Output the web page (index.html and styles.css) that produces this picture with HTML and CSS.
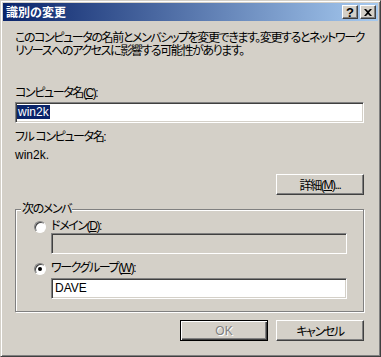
FILE: index.html
```html
<!DOCTYPE html>
<html lang="ja">
<head>
  <meta charset="utf-8">
  <title>識別の変更</title>
  <link rel="stylesheet" href="styles.css">
</head>
<body>
  <div class="window">
    <div class="titlebar">
      <span class="title">識別の変更</span>
      <div class="caption-btns">
        <span class="cap-btn help">?</span>
        <span class="cap-btn close">
          <svg width="8" height="7" viewBox="0 0 8 7"><path d="M0 0h2l2 2 2-2h2L5 3.5 8 7H6L4 5 2 7H0l3-3.5z" fill="#000"/></svg>
        </span>
      </div>
    </div>

    <div class="content">
      <p class="desc">このコンピュータの名前とメンバシップを変更できます。変更するとネットワーク<br>リソースへのアクセスに影響する可能性があります。</p>

      <label class="label" for="name">コンピュータ名(<u>C</u>):</label>
      <div class="field" id="name"><span class="selected">win2k</span></div>

      <div class="label full-label">フル コンピュータ名:</div>
      <div class="full-name">win2k.</div>

      <div class="right-row">
        <span class="btn">詳細(<u>M</u>)...</span>
      </div>

      <fieldset class="group">
        <legend>次のメンバ</legend>
        <div class="radio-row">
          <span class="radio"></span>
          <span>ドメイン(<u>D</u>):</span>
        </div>
        <div class="field disabled"></div>
        <div class="radio-row second">
          <span class="radio checked"></span>
          <span>ワークグループ(<u>W</u>):</span>
        </div>
        <div class="field">DAVE</div>
      </fieldset>

      <div class="buttons">
        <span class="btn default disabled">OK</span>
        <span class="btn">キャンセル</span>
      </div>
    </div>
  </div>
</body>
</html>
```

FILE: styles.css
```css
body {
  margin: 0;
  background-color: #d4d0c8;
  font-family: "Liberation Sans", "Noto Sans CJK JP", sans-serif;
  font-size: 12px;
  color: #000;
}

.window {
  width: 381px;
  height: 357px;
  box-sizing: border-box;
  padding: 2px;
  background-color: #d4d0c8;
  border: 1px solid;
  border-color: #d4d0c8 #404040 #404040 #d4d0c8;
  box-shadow: inset 1px 1px #fff, inset -1px -1px #808080;
}

.titlebar {
  height: 18px;
  display: flex;
  align-items: center;
  padding: 0 2px 0 3px;
  background: linear-gradient(to right, #0a246a, #a6caf0);
  color: #fff;
  font-weight: bold;
  font-family: "Noto Sans CJK JP", sans-serif;
}

.title {
  flex: 1;
  line-height: 18px;
}

.caption-btns {
  display: flex;
  gap: 2px;
}

.cap-btn {
  width: 16px;
  height: 14px;
  box-sizing: border-box;
  display: flex;
  align-items: center;
  justify-content: center;
  background-color: #d4d0c8;
  border: 1px solid;
  border-color: #fff #404040 #404040 #fff;
  box-shadow: inset -1px -1px #808080;
  color: #000;
  font-family: "Liberation Sans", sans-serif;
  font-size: 13px;
  font-weight: bold;
}

.content {
  padding: 0 14px 0 12px;
  font-feature-settings: "palt";
  letter-spacing: -1.4px;
}

.desc {
  margin: 11px 0 0;
  line-height: 13px;
  white-space: nowrap;
}

.label {
  display: block;
  line-height: 13px;
  margin-top: 29px;
  margin-bottom: 2px;
}

.full-label {
  margin-top: 8px;
  margin-bottom: 0;
}

.full-name {
  line-height: 13px;
  margin-top: 5px;
  letter-spacing: 0;
}

.field {
  height: 21px;
  box-sizing: border-box;
  padding: 1px 1px 0 3px;
  background-color: #fff;
  border: 1px solid;
  border-color: #808080 #fff #fff #808080;
  box-shadow: inset 1px 1px #404040, inset -1px -1px #d4d0c8;
  line-height: 17px;
  letter-spacing: 0;
}

.field.disabled {
  background-color: #d4d0c8;
}

.selected {
  display: inline-block;
  margin-left: -2px;
  margin-top: 1px;
  padding: 0 1px;
  line-height: 14px;
  background-color: #0a246a;
  color: #fff;
}

.right-row {
  display: flex;
  justify-content: flex-end;
  margin-top: 12px;
}

.btn {
  width: 88px;
  height: 21px;
  box-sizing: border-box;
  display: flex;
  align-items: center;
  justify-content: center;
  background-color: #d4d0c8;
  border: 1px solid;
  border-color: #fff #404040 #404040 #fff;
  box-shadow: inset -1px -1px #808080;
}

.btn.default {
  border-color: #000;
  box-shadow: inset 1px 1px #fff, inset -1px -1px #404040, inset -2px -2px #808080;
}

.btn.disabled {
  color: #808080;
  text-shadow: 1px 1px #fff;
  letter-spacing: 0;
}

.group {
  margin: 8px 0 0;
  padding: 0 16px 12px 5px;
  border: 1px solid #808080;
  box-shadow: inset 1px 1px #fff, 1px 1px #fff;
  min-width: 0;
}

.group legend {
  padding: 0 1px;
  line-height: 13px;
  background-color: #d4d0c8;
}

.radio-row {
  display: flex;
  align-items: center;
  gap: 5px;
  margin-left: 13px;
  margin-top: 4px;
  line-height: 13px;
}

.radio-row.second {
  margin-top: 8px;
  margin-bottom: 3px;
}

.radio {
  width: 12px;
  height: 12px;
  box-sizing: border-box;
  border-radius: 50%;
  border: 1px solid;
  border-color: #808080 #fff #fff #808080;
  background-color: #fff;
  box-shadow: inset 1px 1px #404040;
  display: flex;
  align-items: center;
  justify-content: center;
}

.radio.checked::after {
  content: "";
  width: 4px;
  height: 4px;
  border-radius: 50%;
  background-color: #000;
}

.group .field {
  margin-left: 30px;
}

.buttons {
  display: flex;
  justify-content: flex-end;
  gap: 8px;
  margin-top: 8px;
}
```
